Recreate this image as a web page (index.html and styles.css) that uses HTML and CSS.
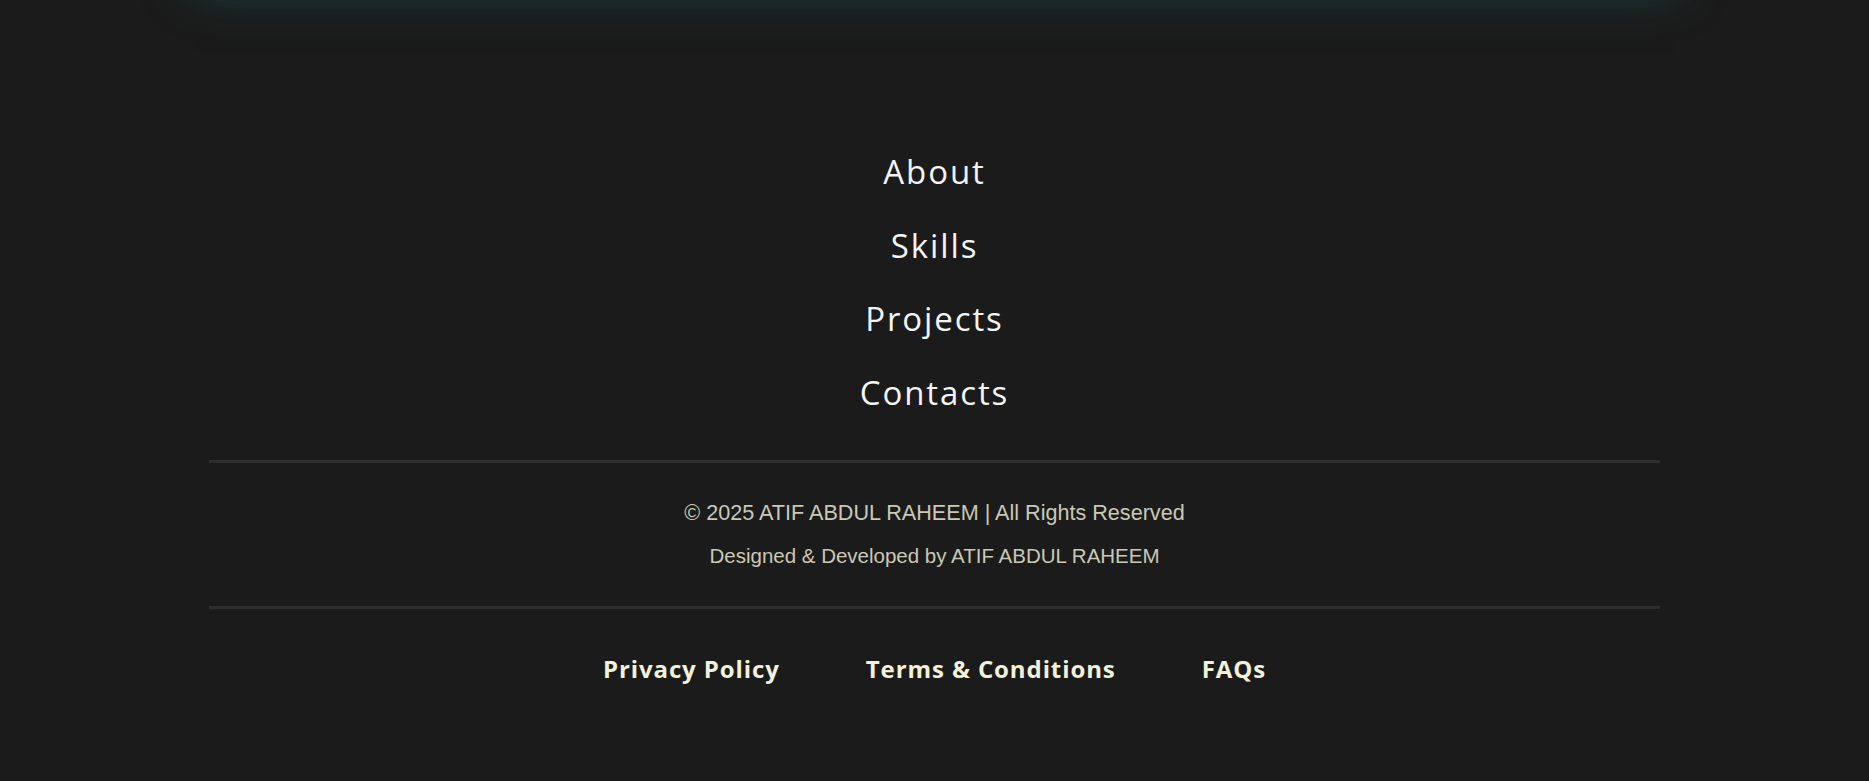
FILE: index.html
```html
<!DOCTYPE html>
<html lang="en">
<head>
<meta charset="utf-8">
<title>Footer</title>
<link rel="stylesheet" href="styles.css">
</head>
<body>
<div class="page">
  <div class="card-edge"></div>
  <footer class="footer">
    <nav class="footer-nav">
      <a href="#about">About</a>
      <a href="#skills">Skills</a>
      <a href="#projects">Projects</a>
      <a href="#contacts">Contacts</a>
    </nav>
    <div class="rule"></div>
    <div class="credits">
      <p class="copy">© 2025 ATIF ABDUL RAHEEM | All Rights Reserved</p>
      <p class="designed">Designed &amp; Developed by ATIF ABDUL RAHEEM</p>
    </div>
    <div class="rule"></div>
    <div class="legal">
      <a href="#privacy">Privacy Policy</a>
      <a href="#terms">Terms &amp; Conditions</a>
      <a href="#faqs">FAQs</a>
    </div>
  </footer>
</div>
</body>
</html>
```
FILE: styles.css
```css
* { box-sizing: border-box; }
html, body {
  margin: 0;
  padding: 0;
  background: #1b1b1b;
  height: 100%;
  overflow: hidden;
}
.page {
  width: 100%;
  display: flex;
  flex-direction: column;
  align-items: center;
}
.card-edge {
  width: 1470px;
  height: 200px;
  margin-top: -220px;
  margin-bottom: 20px;
  background: #1b1b1b;
  box-shadow: 0 0 45px 6px rgba(35, 95, 95, 0.75);
}
.footer {
  width: 1451px;
  display: flex;
  flex-direction: column;
  align-items: center;
  padding-top: 148px;
}
.footer-nav {
  display: flex;
  flex-direction: column;
  align-items: center;
  gap: 25.5px;
}
.footer-nav a {
  font-family: "Open Sans", "Noto Sans", sans-serif;
  font-weight: 400;
  font-size: 33px;
  letter-spacing: 1.9px;
  line-height: 48px;
  color: #f4f4f4;
  text-decoration: none;
}
.rule {
  width: 100%;
  height: 3px;
  background: #2e2e2e;
}
.footer-nav + .rule { margin-top: 43px; }
.credits {
  display: flex;
  flex-direction: column;
  align-items: center;
  padding: 37px 0 38px;
  gap: 18px;
}
.credits p {
  margin: 0;
  font-family: "Liberation Sans", Arial, sans-serif;
  color: #c9c9b6;
}
.copy { font-size: 21.6px; line-height: 26px; }
.designed { font-size: 20.5px; line-height: 24px; }
.legal {
  display: flex;
  gap: 86px;
  margin-top: 44px;
}
.legal a {
  font-family: "Open Sans", "Noto Sans", sans-serif;
  font-weight: 700;
  font-size: 24px;
  letter-spacing: 0.9px;
  line-height: 32px;
  color: #f2f2da;
  text-decoration: none;
}
```
